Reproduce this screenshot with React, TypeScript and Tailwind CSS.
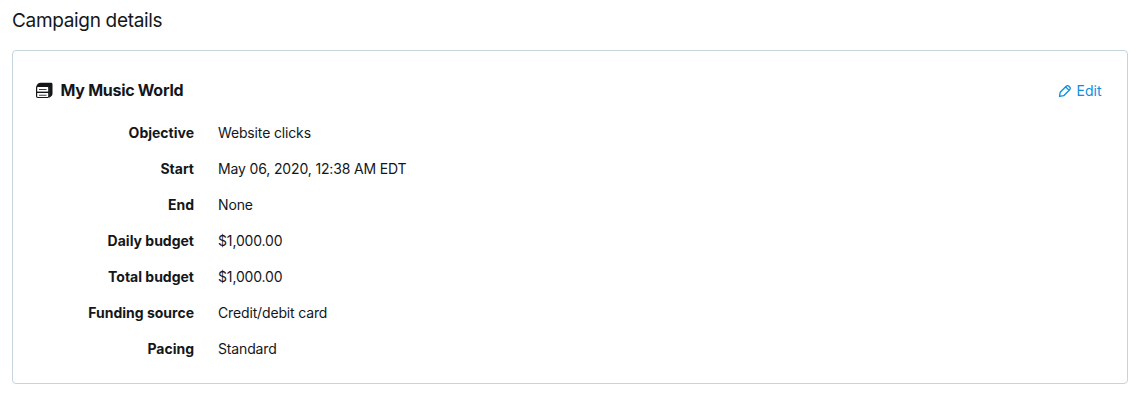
const rows: [string, string][] = [
  ['Objective', 'Website clicks'],
  ['Start', 'May 06, 2020, 12:38 AM EDT'],
  ['End', 'None'],
  ['Daily budget', '$1,000.00'],
  ['Total budget', '$1,000.00'],
  ['Funding source', 'Credit/debit card'],
  ['Pacing', 'Standard'],
];

function CampaignIcon() {
  return (
    <svg width="18" height="18" viewBox="0 0 18 18" fill="none" className="shrink-0">
      <path d="M5.5 1.8h10.6a1.4 1.4 0 0 1 1.4 1.4v9.6c0 1.4-.8 2.8-3.4 3.9V6H1.2C1.8 3.2 3.6 1.8 5.5 1.8z" fill="#14171a" />
      <rect x="1.6" y="5.5" width="12.2" height="11" rx="1.2" fill="white" stroke="#14171a" strokeWidth="1.2" />
      <path d="M1.5 11.3h12.5" stroke="#14171a" strokeWidth="1.4" />
      <path d="M4 8.5h7.5M4 14.2h7.5" stroke="#3b4045" strokeWidth="1.1" />
    </svg>
  );
}

function PencilIcon() {
  return (
    <svg width="14" height="14" viewBox="0 0 14 14" fill="none" stroke="#0c8fdf" strokeWidth="1.3" strokeLinejoin="round">
      <path d="M1.5 12.4l.7-4.2 6-6a1.9 1.9 0 0 1 2.7 0l.8.8a1.9 1.9 0 0 1 0 2.7l-6 6zM7.7 2.9L11 6.2" />
    </svg>
  );
}

export default function App() {
  return (
    <main className="h-[402px] bg-white px-3 pt-[9px] font-['Inter',sans-serif] text-[#14171a]">
      <h1 className="h-[41px] text-[19px] leading-6 tracking-[-0.32px]">Campaign details</h1>
      <section className="mr-[3px] h-[334px] rounded border border-[#c5d5de] pr-[23px] pl-[22px] pt-[27px]">
        <header className="flex h-6 items-center justify-between pr-[2.5px]">
          <div className="flex items-center gap-[7px]">
            <CampaignIcon />
            <h2 className="pl-[0.5px] text-base font-bold tracking-[-0.28px]">My Music World</h2>
          </div>
          <button className="flex items-center gap-[5px] pt-[2px] text-sm text-[#0c8fdf]"><PencilIcon />Edit</button>
        </header>
        <dl className="mt-[13px]">
          {rows.map(([label, value]) => (
            <div key={label} className="flex h-9 items-center gap-6 text-sm leading-5">
              <dt className="w-[159px] text-right font-bold">{label}</dt>
              <dd className="tracking-[-0.15px]">{value}</dd>
            </div>
          ))}
        </dl>
      </section>
    </main>
  );
}
